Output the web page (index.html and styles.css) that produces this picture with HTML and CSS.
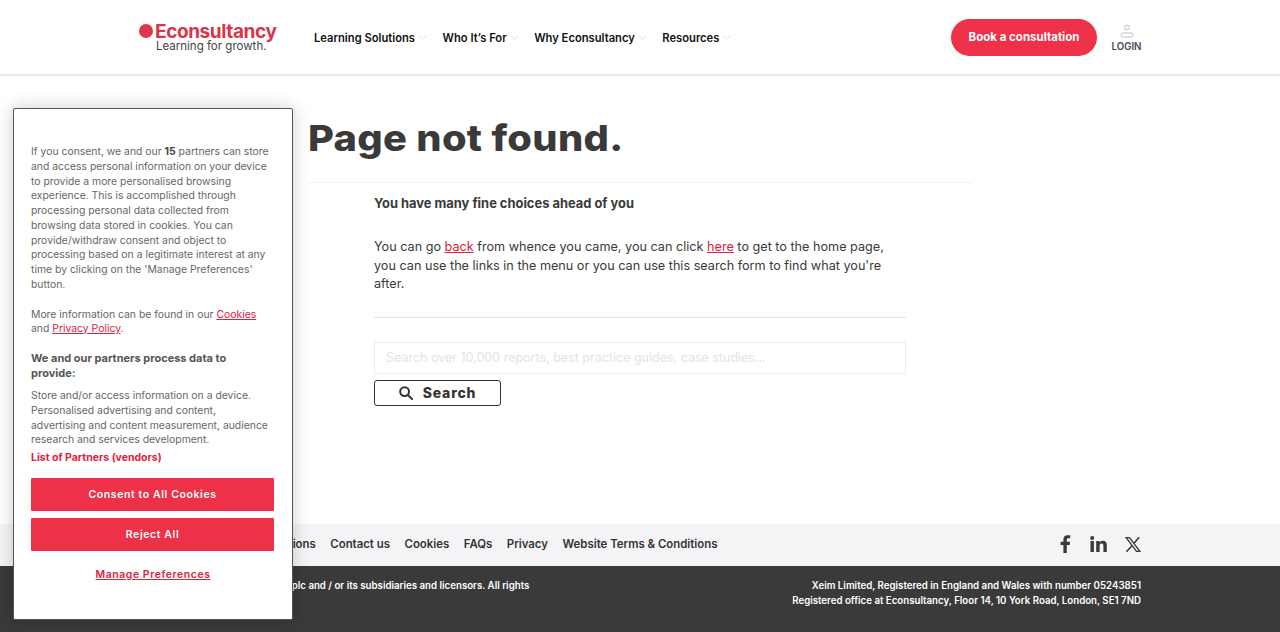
FILE: index.html
```html
<!DOCTYPE html>
<html lang="en">
<head>
    <meta charset="UTF-8">
    <meta name="viewport" content="width=device-width, initial-scale=1.0">
    <title>Page not found - Econsultancy</title>
    <link rel="stylesheet" href="styles.css">
</head>
<body>
    <header class="site-header">
        <div class="logo">
            <div class="logo-top">
                <span class="logo-dot"></span>
                <span class="logo-name">Econsultancy</span>
            </div>
            <div class="logo-tag">Learning for growth.</div>
        </div>
        <nav class="main-nav">
            <a href="#">Learning Solutions<svg class="chev" width="9" height="5" viewBox="0 0 9 5"><path d="M1 1l3.500 3L8 1" fill="none" stroke="#dfe1e6"/></svg></a>
            <a href="#">Who It’s For<svg class="chev" width="9" height="5" viewBox="0 0 9 5"><path d="M1 1l3.500 3L8 1" fill="none" stroke="#dfe1e6"/></svg></a>
            <a href="#">Why Econsultancy<svg class="chev" width="9" height="5" viewBox="0 0 9 5"><path d="M1 1l3.500 3L8 1" fill="none" stroke="#dfe1e6"/></svg></a>
            <a href="#">Resources<svg class="chev" width="9" height="5" viewBox="0 0 9 5"><path d="M1 1l3.500 3L8 1" fill="none" stroke="#dfe1e6"/></svg></a>
        </nav>
        <a class="book-btn" href="#">Book a consultation</a>
        <a class="login" href="#">
            <svg width="14" height="14" viewBox="0 0 14 14" fill="none" stroke="#b9c0d0"><circle cx="7" cy="3.500" r="2.500"/><rect x="1" y="9" width="12" height="4" rx="2"/></svg>
            <span>LOGIN</span>
        </a>
    </header>

    <main class="content">
        <h1 class="title"><span>Page not found.</span></h1>
        <div class="body-col">
            <p class="lead">You have many fine choices ahead of you</p>
            <p class="copy">You can go <a href="#">back</a> from whence you came, you can click <a href="#">here</a> to get to the home page, you can use the links in the menu or you can use this search form to find what you're after.</p>
            <hr class="rule">
            <input class="search-input" type="text" placeholder="Search over 10,000 reports, best practice guides, case studies...">
            <button class="search-btn">
                <svg width="14" height="14" viewBox="0 0 14 14" fill="none" stroke="#333" stroke-width="2"><circle cx="5.600" cy="5.600" r="4.400"/><path d="M9 9l4 4" stroke-linecap="round"/></svg>
                Search
            </button>
        </div>
    </main>

    <div class="footer-links">
        <nav class="footer-nav">
            <a href="#">About us</a>
            <a href="#">Terms &amp; Conditions</a>
            <a href="#">Contact us</a>
            <a href="#">Cookies</a>
            <a href="#">FAQs</a>
            <a href="#">Privacy</a>
            <a href="#">Website Terms &amp; Conditions</a>
        </nav>
        <div class="social">
            <svg width="12" height="18" viewBox="0 0 12 18" fill="#3a3a3a"><path d="M3.400 18V10H.6V6.800h2.800V4.600C3.400 1.700 5 .2 7.600.2c1.200 0 2.300.1 2.600.1v2.900H8.500C7.100 3.200 6.800 3.900 6.800 4.900v1.900h3.300L9.600 10H6.800v8z"/></svg>
            <svg width="17" height="16" viewBox="0 0 17 16" fill="#3a3a3a"><rect x="0.500" y="5" width="3.400" height="11"/><circle cx="2.200" cy="2" r="2"/><path d="M6.200 5h3.200v1.500C10 5.500 11.200 4.700 12.800 4.700c3.300 0 4 2.200 4 5V16h-3.400v-5.600c0-1.300 0-3-1.800-3s-2 1.400-2 2.900V16H6.200z"/></svg>
            <svg width="16" height="15" viewBox="0 0 16 15" fill="none" stroke="#3a3a3a"><path d="M1.200.7h3.300l10.300 13.600h-3.300z" stroke-width="1.300"/><path d="M14.200.3L9 6.300M7 8.700L1.400 14.700" stroke-width="1.600"/></svg>
        </div>
    </div>
    <footer class="footer-dark">
        <p class="copyright">© Copyright 2024 Centaur Media plc and / or its subsidiaries and licensors. All rights reserved.</p>
        <p class="registered">Xeim Limited, Registered in England and Wales with number 05243851<br>Registered office at Econsultancy, Floor 14, 10 York Road, London, SE1 7ND</p>
    </footer>

    <aside class="cookie-box">
        <p>If you consent, we and our <b>15</b> partners can store and access personal information on your device to provide a more personalised browsing experience. This is accomplished through processing personal data collected from browsing data stored in cookies. You can provide/withdraw consent and object to processing based on a legitimate interest at any time by clicking on the 'Manage Preferences' button.</p>
        <p class="more">More information can be found in our <a href="#">Cookies</a> and <a href="#">Privacy Policy</a>.</p>
        <h4>We and our partners process data to provide:</h4>
        <p class="purposes">Store and/or access information on a device. Personalised advertising and content, advertising and content measurement, audience research and services development.</p>
        <a class="vendors" href="#">List of Partners (vendors)</a>
        <button class="cookie-btn">Consent to All Cookies</button>
        <button class="cookie-btn">Reject All</button>
        <a class="manage" href="#">Manage Preferences</a>
    </aside>
</body>
</html>
```

FILE: styles.css
```css
* {
    box-sizing: border-box;
}
html, body {
    height: 100%;
}
body {
    margin: 0;
    display: flex;
    flex-direction: column;
    height: 632px;
    overflow: hidden;
    font-family: Inter, "Open Sans", Arial, sans-serif;
    color: #3a3a3a;
    background: #fff;
}
a {
    color: inherit;
    text-decoration: none;
}
p {
    margin: 0;
}

/* header */
.site-header {
    display: flex;
    align-items: center;
    height: 76px;
    padding: 0 139px;
    border-bottom: 2px solid #e6e9f3;
}
.logo {
    width: 175px;
}
.logo-top {
    display: flex;
    align-items: center;
    gap: 2px;
    height: 17px;
}
.logo-dot {
    width: 14px;
    height: 14px;
    border-radius: 50%;
    background: #e0364c;
}
.logo-name {
    font-size: 19px;
    font-weight: 700;
    letter-spacing: -0.4px;
    color: #d8344a;
}
.logo-tag {
    margin: 0 0 0 17px;
    font-size: 11.500px;
    line-height: 12px;
    color: #444;
}
.main-nav {
    display: flex;
    gap: 15.500px;
    flex: 1;
    padding-top: 1px;
}
.main-nav a {
    display: flex;
    align-items: center;
    gap: 3px;
    font-size: 11.200px;
    font-weight: 600;
    color: #111;
}
.book-btn {
    width: 146px;
    height: 37px;
    margin-right: 14px;
    border-radius: 19px;
    background: #ee3049;
    color: #fff;
    font-size: 11.500px;
    font-weight: 700;
    line-height: 37px;
    text-align: center;
}
.login {
    display: flex;
    flex-direction: column;
    align-items: center;
    gap: 3px;
    width: 30px;
    padding: 1px 0 0 1px;
    font-size: 9.700px;
    font-weight: 600;
    color: #444b5a;
}

/* main column */
.content {
    flex: 1;
    padding-left: 308px;
}
.title {
    margin: 40px 0 24px;
    width: 664px;
    padding-bottom: 22px;
    border-bottom: 1px solid #f3f3f3;
    font-size: 36px;
    line-height: 44px;
    font-weight: 800;
    letter-spacing: 0.3px;
    color: #3a3a3a;
}
.title span {
    display: inline-block;
    transform: scaleX(1.105);
    transform-origin: left center;
}
.body-col {
    width: 532px;
    margin-left: 66px;
    margin-top: -12px;
}
.lead {
    font-size: 12.900px;
    font-weight: 700;
    line-height: 18px;
}
.copy {
    margin-top: 25px;
    font-size: 12.650px;
    line-height: 18.500px;
}
.copy a {
    color: #e0203f;
    text-decoration: underline;
}
.rule {
    margin: 23px 0 24px;
    border: 0;
    border-top: 1px solid #e4e4e4;
}
.search-input {
    display: block;
    width: 100%;
    height: 32px;
    padding: 0 11px;
    border: 1px solid #eee;
    font-family: inherit;
    font-size: 12.500px;
}
.search-input::placeholder {
    color: #e4e4e4;
}
.search-btn {
    display: flex;
    align-items: center;
    justify-content: center;
    gap: 10px;
    width: 127px;
    height: 26px;
    margin-top: 6px;
    border: 1px solid #333;
    border-radius: 3px;
    background: #fff;
    font-family: inherit;
    font-size: 14px;
    font-weight: 800;
    letter-spacing: 0.8px;
    color: #333;
}

/* footer */
.footer-links {
    display: flex;
    align-items: center;
    justify-content: space-between;
    height: 42px;
    padding: 0 139px 2px;
    background: #f4f4f7;
}
.footer-nav {
    display: flex;
    gap: 14.500px;
    padding-left: 5.500px;
    font-size: 11.400px;
    font-weight: 600;
    color: #333;
}
.social {
    display: flex;
    align-items: center;
    gap: 18px;
}
.footer-dark {
    display: flex;
    justify-content: space-between;
    height: 66px;
    padding: 12px 139px 0;
    background: #3a3a3a;
    color: #fff;
    font-size: 9.700px;
    font-weight: 600;
    line-height: 15px;
}
.copyright {
    width: 400px;
    margin-left: -6px;
}
.registered {
    text-align: right;
}

/* cookie consent, floats over the page */
.cookie-box {
    position: absolute;
    left: 13px;
    top: 108px;
    width: 280px;
    height: 512px;
    padding: 36px 17px 0;
    background: #fff;
    border: 1px solid #555;
    border-radius: 2px;
    box-shadow: 0 0 18px rgba(0, 0, 0, 0.2);
    font-size: 10.400px;
    line-height: 14.750px;
    color: #666;
}
.cookie-box a {
    color: #e0203f;
    text-decoration: underline;
}
.cookie-box b {
    color: #444;
}
.more {
    margin-top: 15px;
}
.cookie-box h4 {
    margin: 14px 0 8px;
    width: 225px;
    font-size: 11px;
    line-height: 15px;
    font-weight: 700;
    color: #555;
}
.purposes {
    width: 240px;
}
.cookie-box .vendors {
    display: block;
    margin: 3px 0 12px;
    font-size: 10.500px;
    font-weight: 700;
    text-decoration: none;
}
.cookie-btn {
    display: block;
    width: 243px;
    height: 33px;
    margin-bottom: 7px;
    border: 0;
    border-radius: 1px;
    background: #ee3049;
    color: #fff;
    font-family: inherit;
    font-size: 10.500px;
    font-weight: 600;
    letter-spacing: 0.6px;
}
.cookie-box .manage {
    display: block;
    margin-top: 17px;
    text-align: center;
    font-weight: 600;
    letter-spacing: 0.6px;
}
```
